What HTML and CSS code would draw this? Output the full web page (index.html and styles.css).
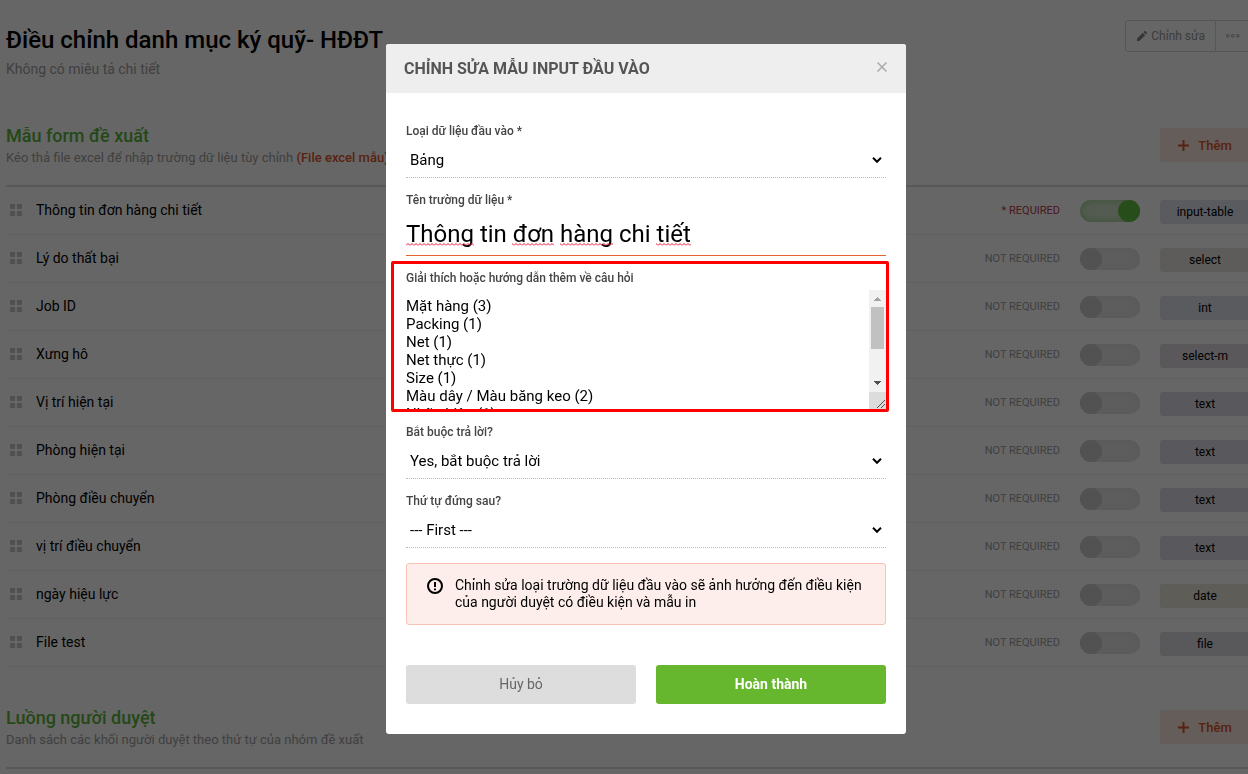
FILE: index.html
```
<!DOCTYPE html>
<html lang="vi">
<head>
<meta charset="UTF-8" />
<meta name="viewport" content="width=device-width, initial-scale=1" />
<title>Điều chỉnh danh mục ký quỹ- HĐĐT</title>
<link rel="stylesheet" href="styles.css">
</head>
<body>
  <div class="page">
    <header class="page-header">
      <div class="page-title">
        <h1>Điều chỉnh danh mục ký quỹ- HĐĐT</h1>
        <p>Không có miêu tả chi tiết</p>
      </div>
      <div class="page-actions">
        <button type="button" class="btn-edit">
          <svg width="10" height="10" viewBox="0 0 10 10" aria-hidden="true"><path d="M0 10V7.6L5.8 1.8 8.2 4.2 2.4 10zM6.5 1.1L7.4.2a.7.7 0 0 1 1 0L9.8 1.6a.7.7 0 0 1 0 1L8.9 3.5z"/></svg>
          Chỉnh sửa
        </button>
        <button type="button" class="btn-more" aria-label="Thêm thao tác">
          <svg width="14" height="4" viewBox="0 0 14 4" aria-hidden="true"><rect x=".5" y=".5" width="2.5" height="2.5" rx="1"/><rect x="5.5" y=".5" width="2.5" height="2.5" rx="1"/><rect x="10.5" y=".5" width="2.5" height="2.5" rx="1"/></svg>
        </button>
      </div>
    </header>

    <section>
      <div class="section-header">
        <div>
          <h2>Mẫu form đề xuất</h2>
          <p>Kéo thả file excel để nhập trường dữ liệu tùy chỉnh <a href="#">(File excel mẫu)</a></p>
        </div>
        <button type="button" class="btn-add"><svg width="11" height="11" viewBox="0 0 11 11" aria-hidden="true"><path d="M5.5 0v11M0 5.5h11"/></svg>Thêm</button>
      </div>
      <ul class="rows" id="rows"></ul>
    </section>

    <section>
      <div class="section-header">
        <div>
          <h2>Luồng người duyệt</h2>
          <p>Danh sách các khối người duyệt theo thứ tự của nhóm đề xuất</p>
        </div>
        <button type="button" class="btn-add"><svg width="11" height="11" viewBox="0 0 11 11" aria-hidden="true"><path d="M5.5 0v11M0 5.5h11"/></svg>Thêm</button>
      </div>
    </section>
  </div>

  <div class="overlay">
    <div class="modal" role="dialog" aria-modal="true" aria-labelledby="modalTitle">
      <div class="modal-header">
        <h3 id="modalTitle">CHỈNH SỬA MẪU INPUT ĐẦU VÀO</h3>
        <button type="button" class="btn-close" aria-label="Đóng">
          <svg width="10" height="10" viewBox="0 0 10 10" aria-hidden="true"><path d="M.5.5l9 9M9.5.5l-9 9"/></svg>
        </button>
      </div>
      <form class="modal-body">
        <div class="field">
          <label for="type">Loại dữ liệu đầu vào *</label>
          <div class="select">
            <select id="type"><option>Bảng</option></select>
            <svg width="10" height="6" viewBox="0 0 10 6" aria-hidden="true"><path d="M1 .8l4 4 4-4"/></svg>
          </div>
        </div>

        <div class="field field-name">
          <label for="name">Tên trường dữ liệu *</label>
          <input type="text" id="name" value="Thông tin đơn hàng chi tiết" />
          <!-- spelling marks -->
          <svg class="spelling" width="290" height="3" aria-hidden="true">
            <defs>
              <pattern id="wave" width="4" height="3" patternUnits="userSpaceOnUse"><path d="M0 2.5L2 .5l2 2"/></pattern>
            </defs>
            <rect width="68" height="3"/>
            <rect x="106" width="42" height="3"/>
            <rect x="154" width="53" height="3"/>
            <rect x="250" width="35" height="3"/>
          </svg>
        </div>

        <div class="field field-hint">
          <label for="hint">Giải thích hoặc hướng dẫn thêm về câu hỏi</label>
          <div class="textarea">
            <textarea id="hint">Mặt hàng (3)
Packing (1)
Net (1)
Net thực (1)
Size (1)
Màu dây / Màu băng keo (2)
Nhãn hiệu (1)
Số lượng (1)
Đơn vị tính (1)
Đơn giá (1)
Thành tiền (1)
Quy cách (1)
Ngày giao (1)
Địa điểm (1)
Ghi chú (1)</textarea>
            <svg class="scrollbar" width="17" height="120" viewBox="0 0 17 120" shape-rendering="crispEdges" aria-hidden="true">
              <path fill="#f1f1f1" d="M0 0h17v102H0z"/>
              <path fill="#a3a3a3" d="M5 11h7L8.500 7z"/>
              <path fill="#c1c1c1" d="M2 17h13v42H2z"/>
              <path fill="#505050" d="M5 91h7l-3.500 4z"/>
              <path fill="#dcdcdc" d="M0 102h17v18H0z"/>
              <path fill="none" stroke="#505050" shape-rendering="auto" d="M8 118l8-8M12 118l4-4"/>
            </svg>
          </div>
        </div>

        <div class="field">
          <label for="required">Bắt buộc trả lời?</label>
          <div class="select">
            <select id="required"><option>Yes, bắt buộc trả lời</option></select>
            <svg width="10" height="6" viewBox="0 0 10 6" aria-hidden="true"><path d="M1 .8l4 4 4-4"/></svg>
          </div>
        </div>

        <div class="field">
          <label for="order">Thứ tự đứng sau?</label>
          <div class="select">
            <select id="order"><option>--- First ---</option></select>
            <svg width="10" height="6" viewBox="0 0 10 6" aria-hidden="true"><path d="M1 .8l4 4 4-4"/></svg>
          </div>
        </div>

        <div class="alert">
          <svg width="16" height="16" viewBox="0 0 16 16" aria-hidden="true"><circle cx="8" cy="8" r="7"/><path d="M8 4v5M8 10.500v1.700"/></svg>
          <p>Chỉnh sửa loại trường dữ liệu đầu vào sẽ ảnh hưởng đến điều kiện của người duyệt có điều kiện và mẫu in</p>
        </div>

        <div class="modal-actions">
          <button type="button" class="btn btn-cancel">Hủy bỏ</button>
          <button type="submit" class="btn btn-submit">Hoàn thành</button>
        </div>
      </form>
    </div>
  </div>

<script src="script.js"></script>
</body>
</html>
```
FILE: styles.css
```
*, *::before, *::after {
  box-sizing: border-box;
}
body {
  margin: 0;
  font-family: Roboto, "Liberation Sans", sans-serif;
  font-size: 14px;
  color: #000;
  background: #fff;
  height: 100vh;
  overflow: hidden;
}
h1, h2, h3, p, ul {
  margin: 0;
  padding: 0;
}
button, input, select, textarea {
  font-family: inherit;
  color: inherit;
}
button {
  cursor: pointer;
}

/* Page */
.page {
  margin-right: -2px;
  padding: 20px 0 0 6px;
}
.page-header {
  display: flex;
  justify-content: space-between;
  align-items: flex-start;
  height: 65px;
}
.page-title h1 {
  font-size: 24px;
  line-height: 40px;
  font-weight: 500;
}
.page-title p {
  line-height: 18px;
  color: #a0a0a0;
}
.page-actions {
  display: flex;
}
.page-actions button {
  height: 32px;
  border: 1px solid #d8d8d8;
  background: none;
  font-size: 12px;
  line-height: 30px;
  color: #999;
}
.btn-edit {
  display: flex;
  align-items: center;
  gap: 4px;
  padding: 0 10px 0 11px;
  border-radius: 3px 0 0 3px;
}
.btn-edit svg {
  fill: #888;
}
.page-actions .btn-more {
  width: 34px;
  padding: 0;
  border-left: 0;
}
.btn-more svg {
  display: block;
  margin: 0 auto;
  fill: none;
  stroke: #999;
}
.section-header {
  display: flex;
  justify-content: space-between;
  align-items: flex-start;
  margin-top: 43px;
  padding-bottom: 23px;
  border-bottom: 2px solid #dcdcdc;
}
.section-header h2 {
  font-size: 18px;
  line-height: 16px;
  font-weight: 500;
  color: #5bb53a;
}
.section-header p {
  font-size: 13px;
  line-height: 28px;
  height: 18px;
  color: #a0a0a0;
}
.section-header a {
  font-weight: 500;
  color: #dd5528;
  text-decoration: none;
}
.btn-add {
  display: flex;
  align-items: center;
  justify-content: center;
  gap: 9px;
  width: 90px;
  height: 34px;
  border: 0;
  border-radius: 3px;
  background: #fbe8e1;
  font-size: 13px;
  font-weight: 500;
  color: #dd5528;
}
.btn-add svg {
  stroke: #dd5528;
  stroke-width: 2;
}
.rows {
  list-style: none;
}
.rows li {
  display: flex;
  align-items: flex-start;
  height: 48px;
  padding-top: 13px;
  border-bottom: 1px solid #ededed;
}
.grip {
  margin: 4px 14px 0 4px;
  fill: #c8c8c8;
}
.row-name {
  flex: 1;
  line-height: 20px;
}
.row-state {
  font-size: 11px;
  line-height: 22px;
  color: #a0a0a0;
}
.row-state.on {
  color: #c0354a;
}
.switch {
  appearance: none;
  width: 60px;
  height: 22px;
  margin: 0 20px;
  border-radius: 11px;
  background: #e8e8e8;
  box-shadow: inset 0 0 10px #ddd;
}
.switch::before {
  content: "";
  display: block;
  width: 22px;
  height: 22px;
  border-radius: 50%;
  background: #ccc;
}
.switch:checked {
  background: #d3e6cd;
  box-shadow: inset 0 0 10px #92c983;
}
.switch:checked::before {
  margin-left: 38px;
  background: #62c043;
}
.tag {
  width: 90px;
  border-radius: 3px;
  font-size: 12px;
  line-height: 24px;
  text-align: center;
}
.tag-input-table, .tag-int { background: #e2e4ee; }
.tag-select { background: #ebe7e0; }
.tag-select-m { background: #e4dde3; }
.tag-text { background: #dfdee9; }
.tag-date { background: #ebe9dc; }
.tag-file { background: #dfdbe3; }

/* Modal */
.overlay {
  position: fixed;
  inset: 0;
  display: flex;
  justify-content: center;
  align-items: flex-start;
  padding: 44px 0 0 44px;
  background: rgba(0, 0, 0, 0.6);
}
.modal {
  width: 520px;
  border-radius: 3px;
  background: #fff;
  overflow: hidden;
}
.modal-header {
  display: flex;
  justify-content: space-between;
  align-items: center;
  height: 49px;
  padding: 0 18px;
  background: #eee;
}
.modal-header h3 {
  font-size: 16px;
  font-weight: 700;
  color: #555;
}
.btn-close {
  padding: 0 1px 4px;
  border: 0;
  background: none;
}
.btn-close svg {
  display: block;
  stroke: #aaa;
  stroke-width: 1.5;
}
.modal-body {
  padding: 29px 20px 30px;
}
.field {
  position: relative;
  margin-bottom: 13px;
}
.field label {
  display: block;
  font-size: 12px;
  font-weight: 500;
  line-height: 18px;
  color: #444;
}
.select {
  position: relative;
}
.select select {
  display: block;
  appearance: none;
  width: 100%;
  height: 38px;
  padding: 2px 4px 0;
  border: 0;
  border-bottom: 1px dotted #bbb;
  border-radius: 0;
  background: none;
  font-size: 15px;
  outline: none;
}
.select svg {
  position: absolute;
  right: 4px;
  top: 17px;
  fill: none;
  stroke: #000;
  stroke-width: 2;
}
.field input {
  display: block;
  width: 100%;
  height: 47px;
  padding: 4px 0 0;
  border: 0;
  border-bottom: 1px solid #e8622f;
  font-size: 24px;
  outline: none;
}
.spelling {
  position: absolute;
  left: 0;
  bottom: 10px;
}
.spelling rect {
  fill: url(#wave);
}
.spelling path {
  fill: none;
  stroke: #e8112d;
}
.textarea {
  position: relative;
  margin-top: 3px;
}
.textarea textarea {
  display: block;
  width: 100%;
  height: 120px;
  padding: 7px 17px 7px 0;
  border: 0;
  background: none;
  font-size: 15px;
  line-height: 18px;
  resize: none;
  outline: none;
  scrollbar-width: none;
}
.scrollbar {
  position: absolute;
  top: 0;
  right: 0;
}
/* red frame around the hint field */
.field-hint::after {
  content: "";
  position: absolute;
  inset: -8px -3px -2px -15px;
  border: 3px solid #f00;
  border-radius: 2px;
  pointer-events: none;
}
.alert {
  display: flex;
  gap: 12px;
  margin-top: 15px;
  padding: 13px 20px;
  border: 1px solid #f9c2b8;
  border-radius: 3px;
  background: #fdeeeb;
}
.alert svg {
  flex: none;
  margin-top: 1px;
  fill: none;
  stroke: #000;
  stroke-width: 2;
}
.alert p {
  line-height: 17px;
}
.modal-actions {
  display: flex;
  gap: 20px;
  margin-top: 40px;
}
.btn {
  flex: 1;
  height: 39px;
  padding: 0 0 2px;
  border: 0;
  border-radius: 3px;
  font-size: 14px;
}
.btn-cancel {
  background: #ddd;
  color: #666;
}
.btn-submit {
  background: #67b72e;
  color: #fff;
  font-weight: 700;
}
```
FILE: script.js
```
const fields = [
  ['Thông tin đơn hàng chi tiết', 'input-table', true],
  ['Lý do thất bại', 'select', false],
  ['Job ID', 'int', false],
  ['Xưng hô', 'select-m', false],
  ['Vị trí hiện tại', 'text', false],
  ['Phòng hiện tại', 'text', false],
  ['Phòng điều chuyển', 'text', false],
  ['vị trí điều chuyển', 'text', false],
  ['ngày hiệu lực', 'date', false],
  ['File test', 'file', false]
];

document.getElementById('rows').innerHTML = fields.map(([name, type, required]) => `
  <li>
    <svg class="grip" width="12" height="12" viewBox="0 0 12 12" aria-hidden="true"><path d="M0 0h5v5H0zM7 0h5v5H7zM0 7h5v5H0zM7 7h5v5H7z"/></svg>
    <span class="row-name">${name}</span>
    <span class="row-state ${required ? 'on' : ''}">${required ? '* REQUIRED' : 'NOT REQUIRED'}</span>
    <input type="checkbox" class="switch" aria-label="${name}" ${required ? 'checked' : ''} />
    <span class="tag tag-${type}">${type}</span>
  </li>`).join('');
```
